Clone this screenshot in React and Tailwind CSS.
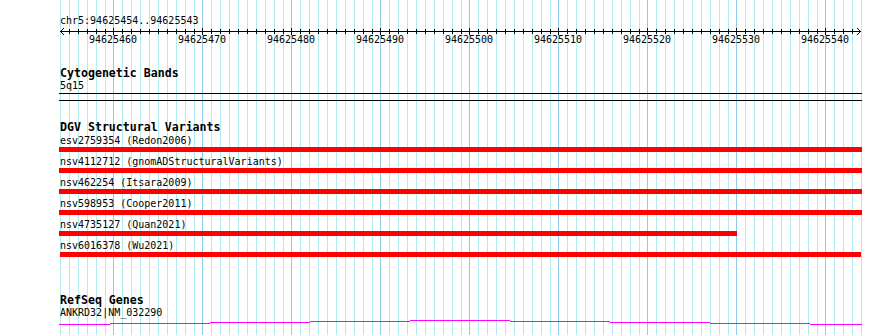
import React from 'react';

const START = 94625454;
const PX = 8.9;
const BASES = Array.from({ length: 91 }, (_, i) => i);

const variants = [
  { label: 'esv2759354 (Redon2006)', bar: 'ml-[-1px] w-[803px]' },
  { label: 'nsv4112712 (gnomADStructuralVariants)', bar: 'ml-[-1px] w-[803px]' },
  { label: 'nsv462254 (Itsara2009)', bar: 'ml-[-1px] w-[803px]' },
  { label: 'nsv598953 (Cooper2011)', bar: 'ml-[-1px] w-[803px]' },
  { label: 'nsv4735127 (Quan2021)', bar: 'ml-[-1px] w-[678px]' },
  { label: 'nsv6016378 (Wu2021)', bar: 'w-[801px]' },
];

// stepped magenta trace: one level per 100px
const genePath = () => {
  const levels = [
    [0, 51, 6], [51, 151, 5], [151, 251, 4], [251, 351, 3], [351, 451, 2],
    [451, 551, 3], [551, 651, 4], [651, 751, 5], [751, 803, 6],
  ];
  return levels.map(([a, b, y]) => `M${a} ${y + 0.5}H${b}`).join('');
};

const Grid = () => (
  <svg className="absolute inset-0" width="890" height="335" shapeRendering="crispEdges">
    {BASES.map(i => {
      const x = Math.round(60 + i * PX) + 0.5;
      const major = i % 10 === 6;
      return <line key={i} x1={x} x2={x} y1="0" y2="335" stroke={major ? '#8ecbec' : '#b2ecf0'} strokeWidth="1" />;
    })}
  </svg>
);

const Ruler = () => (
  <svg width="805" height="20" className="overflow-visible block" shapeRendering="crispEdges">
    <line x1="0" x2="801" y1="5.5" y2="5.5" stroke="#000" />
    <polyline points="4,2 0.5,5.5 4,9" fill="none" stroke="#000" shapeRendering="auto" />
    <polyline points="797,2 800.5,5.5 797,9" fill="none" stroke="#000" shapeRendering="auto" />
    {BASES.slice(1, 90).map(i => {
      const x = Math.round(60 + i * PX) - 60 + 0.5;
      const major = i % 10 === 6;
      return <line key={i} x1={x} x2={x} y1={major ? 2 : 3} y2={major ? 9 : 8} stroke="#000" />;
    })}
    {BASES.filter(i => i % 10 === 6).map(i => (
      <text key={i} x={Math.round(60 + i * PX) - 60} y="17" textAnchor="middle" fontSize="10" fill="#000">
        {START + i}
      </text>
    ))}
  </svg>
);

export default function App() {
  return (
    <div className="relative w-[890px] h-[335px] bg-white overflow-hidden font-['DejaVu_Sans_Mono',monospace] text-black">
      <Grid />

      <div className="relative flex flex-col pl-[60px]">
        {/* location + ruler */}
        <div className="mt-[16px] h-[10px] text-[10px] leading-[10px]">chr5:94625454..94625543</div>
        <Ruler />

        {/* Cytogenetic Bands */}
        <div className="mt-[21px] h-[12px] text-[11.6px] leading-[12px] font-bold">Cytogenetic Bands</div>
        <div className="mt-[2px] h-[10px] text-[10px] leading-[10px]">5q15</div>
        <div className="mt-[2px] ml-[-1px] w-[803px] h-[8px] border-y border-black" />

        {/* DGV Structural Variants */}
        <div className="mt-[20px] h-[12px] text-[11.6px] leading-[12px] font-bold">DGV Structural Variants</div>
        <div className="mt-[3px] flex flex-col">
          {variants.map(v => (
            <div key={v.label} className="flex flex-col">
              <div className="h-[10px] text-[10px] leading-[10px] whitespace-pre">{v.label}</div>
              <div className={`mt-[1px] mb-[5px] h-[5px] bg-[#ff0000] ${v.bar}`} />
            </div>
          ))}
        </div>

        {/* RefSeq Genes */}
        <div className="mt-[32px] h-[12px] text-[11.6px] leading-[12px] font-bold">RefSeq Genes</div>
        <div className="mt-[2px] h-[10px] text-[10px] leading-[10px]">ANKRD32|NM_032290</div>
        <svg width="803" height="8" className="block ml-[-1px]" shapeRendering="crispEdges">
          <path d={genePath()} stroke="#ff00ff" strokeWidth="1" fill="none" />
        </svg>
      </div>
    </div>
  );
}
